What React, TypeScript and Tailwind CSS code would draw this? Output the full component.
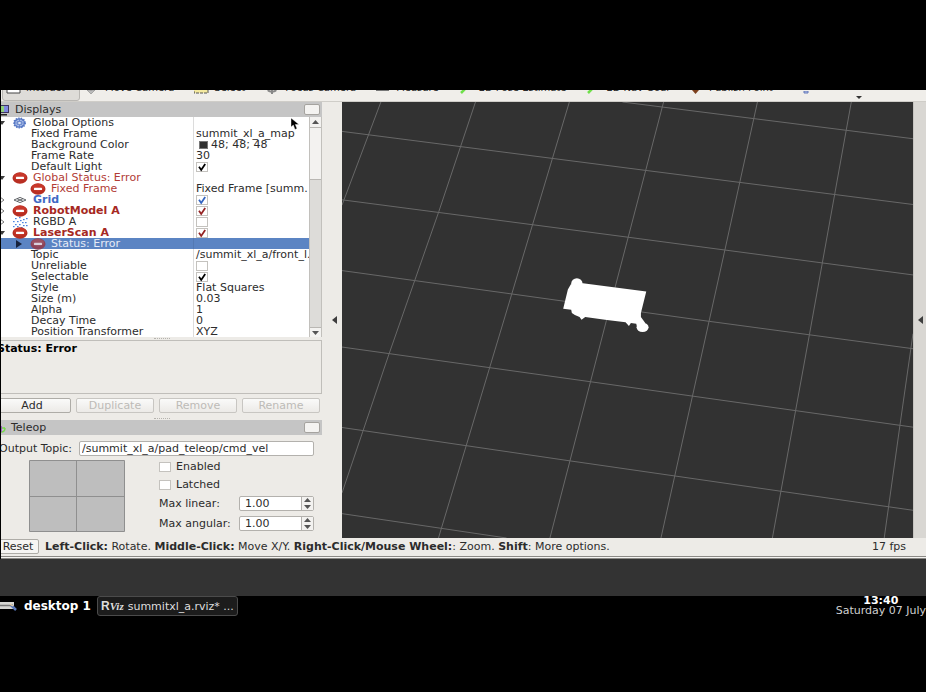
import clsx from "clsx";
import { ReactNode } from "react";

type Row = {
  name: string;
  value?: string;
  check?: "on" | "off";
  checkColor?: string;
  swatch?: boolean;
  level?: "top" | "child" | "prop";
  icon?: ReactNode;
  arrow?: "open" | "closed";
  nameClass?: string;
  selected?: boolean;
};

function ErrorIcon({ dim }: { dim?: boolean }) {
  return (
    <svg viewBox="0 0 16 12" className="h-3 w-4 shrink-0">
      <ellipse cx="8" cy="6" rx="7.5" ry="5.8" fill={dim ? "#8c4358" : "#b82e22"} />
      <ellipse cx="8" cy="4.6" rx="6" ry="3.8" fill={dim ? "#9a5162" : "#c8382b"} />
      <rect x="4" y="4.7" width="8" height="2.4" rx="0.6" fill={dim ? "#d8cfdc" : "#fff"} />
    </svg>
  );
}

function GearIcon() {
  return (
    <svg viewBox="0 0 16 12" className="h-3 w-4 shrink-0" fill="none" stroke="#5577c4">
      <ellipse cx="7.5" cy="6" rx="5" ry="4.2" fill="#a9bce6" strokeWidth="1.2" />
      <ellipse cx="7.5" cy="6" rx="5.8" ry="4.9" strokeWidth="1.4" strokeDasharray="1.3 1.3" />
      <path d="M7.5 2v8M2.5 6h10M4 3.2l7 5.6M11 3.2 4 8.8" strokeWidth="0.7" />
      <ellipse cx="7.5" cy="6" rx="2" ry="1.6" fill="#dfe7f8" strokeWidth="0.8" />
    </svg>
  );
}

function GridIcon() {
  return (
    <svg viewBox="0 0 16 12" className="h-3 w-4 shrink-0" fill="none" stroke="#55585c" strokeWidth="0.9">
      <path d="M2 6l6-2.600L14 6 8 8.600zM5 4.700l6 2.600M11 4.700 5 7.300" />
    </svg>
  );
}

function CloudIcon() {
  const dots = [
    [3, 2], [7, 1], [11, 3], [14, 2], [1, 5], [5, 5], [8, 4], [10, 6], [13, 6],
    [3, 8], [7, 8], [11, 9], [5, 10], [14, 9], [9, 11], [1, 10],
  ];
  return (
    <svg viewBox="0 0 16 12" className="h-3 w-4 shrink-0">
      {dots.map(([x, y]) => (
        <rect key={`${x}-${y}`} x={x} y={y} width="1.6" height="1.2" fill="#4b83e0" />
      ))}
    </svg>
  );
}

const rows: Row[] = [
  { name: "Global Options", level: "top", icon: <GearIcon />, arrow: "open" },
  { name: "Fixed Frame", value: "summit_xl_a_map" },
  { name: "Background Color", value: "48; 48; 48", swatch: true },
  { name: "Frame Rate", value: "30" },
  { name: "Default Light", check: "on", checkColor: "text-black" },
  { name: "Global Status: Error", level: "top", icon: <ErrorIcon />, arrow: "open", nameClass: "text-[#b23c36]" },
  { name: "Fixed Frame", value: "Fixed Frame [summ.", level: "child", icon: <ErrorIcon />, nameClass: "text-[#b23c36]" },
  { name: "Grid", level: "top", icon: <GridIcon />, arrow: "closed", check: "on", checkColor: "text-[#3565c0]", nameClass: "font-bold text-[#4169c4]" },
  { name: "RobotModel A", level: "top", icon: <ErrorIcon />, arrow: "closed", check: "on", checkColor: "text-[#952424]", nameClass: "font-bold text-[#a62822]" },
  { name: "RGBD A", level: "top", icon: <CloudIcon />, arrow: "closed", check: "off" },
  { name: "LaserScan A", level: "top", icon: <ErrorIcon />, arrow: "open", check: "on", checkColor: "text-[#952424]", nameClass: "font-bold text-[#a62822]" },
  { name: "Status: Error", level: "child", icon: <ErrorIcon dim />, arrow: "closed", nameClass: "text-[#e6ebf6]", selected: true },
  { name: "Topic", value: "/summit_xl_a/front_l." },
  { name: "Unreliable", check: "off" },
  { name: "Selectable", check: "on", checkColor: "text-black" },
  { name: "Style", value: "Flat Squares" },
  { name: "Size (m)", value: "0.03" },
  { name: "Alpha", value: "1" },
  { name: "Decay Time", value: "0" },
  { name: "Position Transformer", value: "XYZ" },
];

const tools = [
  { label: "Interact", icon: <path d="M1 0h13v15H1z" fill="#fff" stroke="#444" /> },
  { label: "Move Camera", icon: <path d="M2 12h8l-4 4zM5 8h2v4H5z" fill="#bbb" stroke="#888" strokeWidth="0.6" /> },
  { label: "Select", icon: <path d="M0 2h14v13H0z" fill="#f4e9a0" stroke="#555" strokeDasharray="3 1" /> },
  { label: "Focus Camera", icon: <path d="M7 7v9M3 12c1 2 7 2 8 0" fill="none" stroke="#888" strokeWidth="2" /> },
  { label: "Measure", icon: <path d="M0 10h13v3H0z" fill="#777" /> },
  { label: "2D Pose Estimate", icon: <path d="M2 15 8 9" stroke="#6fe04a" strokeWidth="2.5" /> },
  { label: "2D Nav Goal", icon: <path d="M2 15 8 9" stroke="#6fe04a" strokeWidth="2.5" /> },
  { label: "Publish Point", icon: <path d="M3 8h7v4l-3.500 4L3 12z" fill="#7c3f1c" /> },
];

function Check({ label, on, color }: { label: string; on?: boolean; color?: string }) {
  return (
    <span className="relative inline-flex h-2.5 w-3 shrink-0">
      <input
        type="checkbox"
        aria-label={label}
        defaultChecked={on}
        className="peer h-2.5 w-3 appearance-none border border-[#c4c2be] bg-white"
      />
      <svg viewBox="0 0 12 10" className={clsx("pointer-events-none absolute inset-0 hidden peer-checked:block", color)}>
        <path d="M3 4.800 5.200 8 9.200 2" fill="none" stroke="currentColor" strokeWidth="1.800" />
      </svg>
    </span>
  );
}

function PanelTitle({ icon, title }: { icon: ReactNode; title: string }) {
  return (
    <div className="flex h-[15px] items-center bg-[#c5c5c5] pr-0.5">
      {icon}
      <h2 className="flex-1">{title}</h2>
      <button aria-label={`Close ${title}`} className="h-[11px] w-4 rounded-[2px] border border-[#a5a39f] bg-[#f4f3f1]" />
    </div>
  );
}

function SplitDots() {
  return (
    <div className="flex h-[3px] items-center justify-center">
      <div className="w-4 border-t border-dotted border-[#b5b3ae]" />
    </div>
  );
}

function Arrow({ row }: { row: Row }) {
  if (row.selected) {
    return (
      <svg viewBox="0 0 6 8" className="h-2 w-1.5">
        <path d="M0 0v8l6-4z" fill="#17223c" />
      </svg>
    );
  }
  return (
    <svg viewBox="0 0 6 8" className="-ml-0.5 h-2 w-1.5">
      {row.arrow === "open" && <path d="M0 2h6L3 6z" fill="#3c3c3c" />}
      {row.arrow === "closed" && <path d="M1 1v6l4-3z" fill="none" stroke="#777" />}
    </svg>
  );
}

function DisplayTree() {
  return (
    <div className="flex bg-white">
      <table className="block min-w-0 flex-1">
        <tbody className="block">
          {rows.map((row) => (
            <tr key={row.name + row.value} className={clsx("flex h-[11px]", row.selected && "bg-[#5b84c3]")}>
              <td className="flex w-48 shrink-0 items-center p-0 whitespace-nowrap">
                <span className={clsx("flex shrink-0 items-center", row.level === "top" ? "w-[11px]" : row.level === "child" ? "w-[29px] pl-[15px]" : "w-[30px]")}>
                  {row.arrow && <Arrow row={row} />}
                </span>
                {row.icon && <span className="mr-[5px] flex">{row.icon}</span>}
                <span className={row.nameClass}>{row.name}</span>
              </td>
              <td className={clsx("flex min-w-0 flex-1 items-center overflow-x-clip border-l p-0 pl-0.5 whitespace-nowrap", row.selected ? "border-[#5379b3]" : "border-[#dcdcdc]")}>
                {row.swatch && <span className="mr-[3px] ml-[3px] h-2 w-[9px] border border-[#777] bg-[#303030]" />}
                {row.check ? <Check label={row.name} on={row.check === "on"} color={row.checkColor} /> : row.value}
              </td>
            </tr>
          ))}
        </tbody>
      </table>
      <div className="flex w-[13px] shrink-0 flex-col border-x border-[#c2c0bc] bg-[#dddcd9]">
        <button aria-label="Scroll up" className="flex h-2.5 items-center justify-center bg-[#f3f2f0]">
          <svg viewBox="0 0 7 4" className="h-1 w-[7px]"><path d="M0 4h7L3.500 0z" fill="#555" /></svg>
        </button>
        <div className="h-[53px] border-y border-[#b9b7b3] bg-[#f3f2f0]" />
        <div className="flex-1" />
        <button aria-label="Scroll down" className="flex h-2.5 items-center justify-center border-t border-[#b9b7b3] bg-[#f3f2f0]">
          <svg viewBox="0 0 7 4" className="h-1 w-[7px]"><path d="M0 0h7L3.500 4z" fill="#555" /></svg>
        </button>
      </div>
    </div>
  );
}

function ActionButton({ label, disabled }: { label: string; disabled?: boolean }) {
  return (
    <button
      disabled={disabled}
      className="h-[15px] flex-1 rounded-[2px] border border-[#aeaca7] bg-linear-to-b from-[#fafaf9] to-[#eceae7] leading-[13px] disabled:border-[#c8c6c2] disabled:text-[#bdbbb7]"
    >
      {label}
    </button>
  );
}

function SpinBox({ id, label }: { id: string; label: string }) {
  return (
    <div className="flex h-[15px] items-center">
      <label htmlFor={id} className="w-20">{label}</label>
      <div className="flex h-[15px] flex-1 rounded-[2px] border border-[#b3b1ad] bg-white">
        <input id={id} defaultValue="1.00" className="w-0 min-w-0 flex-1 bg-transparent pl-[5px] outline-none" />
        <div className="flex w-3 flex-col items-center justify-center gap-[3px] border-l border-[#b3b1ad] bg-[#f3f2f0]">
          <button aria-label={`Increase ${label}`}>
            <svg viewBox="0 0 7 4" className="block h-1 w-[7px]"><path d="M0 4h7L3.500 0z" fill="#555" /></svg>
          </button>
          <button aria-label={`Decrease ${label}`}>
            <svg viewBox="0 0 7 4" className="block h-1 w-[7px]"><path d="M0 0h7L3.500 4z" fill="#555" /></svg>
          </button>
        </div>
      </div>
    </div>
  );
}

function Teleop() {
  return (
    <section>
      <PanelTitle
        title="Teleop"
        icon={
          <svg viewBox="0 0 10 12" className="h-3 w-2.5 shrink-0" fill="none">
            <path d="M0 6h4M4 6c0 3-1 4-4 4" stroke="#77d94e" strokeWidth="1.500" />
            <path d="M0 4v6" stroke="#9b3fd0" strokeWidth="1.500" />
          </svg>
        }
      />
      <div className="mt-1.5 flex items-center pr-2">
        <label htmlFor="topic" className="-ml-0.5 w-20 whitespace-nowrap">Output Topic:</label>
        <input
          id="topic"
          defaultValue="/summit_xl_a/pad_teleop/cmd_vel"
          className="h-[15px] min-w-0 flex-1 rounded-[2px] border border-[#b3b1ad] bg-white pl-0.5 outline-none"
        />
      </div>
      <div className="mt-1 flex pr-2 pl-7">
        <svg viewBox="0 0 96 72" className="h-18 w-24 shrink-0" fill="#bebebe" stroke="#8f8f8f">
          <path d="M.5.5h95v71H.5zM47.500.5v71M.5 36.500h95" />
        </svg>
        <div className="ml-[34px] flex flex-1 flex-col">
          <label className="mt-px flex h-[11px] items-center gap-[5px]">
            <Check label="Enabled" />
            Enabled
          </label>
          <label className="mt-[7px] flex h-[11px] items-center gap-[5px]">
            <Check label="Latched" />
            Latched
          </label>
          <div className="mt-1.5 flex flex-col gap-[5px]">
            <SpinBox id="linear" label="Max linear:" />
            <SpinBox id="angular" label="Max angular:" />
          </div>
        </div>
      </div>
    </section>
  );
}

function CollapseArrow() {
  return (
    <svg viewBox="0 0 5 8" className="h-2 w-[5px]">
      <path d="M5 0v8L0 4z" fill="#3d3d3d" />
    </svg>
  );
}

// Ground grid seen in perspective, with the robot footprint on top.
function SceneView() {
  return (
    <svg
      viewBox="5 21 1527 1306"
      preserveAspectRatio="none"
      className="h-[436px] min-w-0 flex-1 bg-[#323232]"
      role="img"
      aria-label="3D view"
    >
      <path
        fill="none"
        stroke="#686868"
        strokeWidth="1"
        vectorEffect="non-scaling-stroke"
        d="M109 21 5 330M362 21 264 349 131 775 5 1192M613 21 459 596 263 1327M865 21 712 676 561 1327M1116 21 1029 464 858 1327M1367 21 1255 718 1156 1327M1532 715 1497 990 1455 1327M755 21 1532 131M5 109 818 226 1532 328M5 314 770 426 1532 539M5 526 459 596 987 678 1532 760M5 755 670 859 1532 995M5 996 615 1096 1532 1244M5 1254 445 1327"
      />
      <g transform="translate(535 495) scale(.892 1)" fill="#fff">
        <path d="M92 72 128 69 318 94 302 158 302 170 315 188 292 207 288 190 272 188 266 197 256 186 200 179 135 170 124 178 118 170 104 164 95 158 93 148 69 145 83 88z" />
        <ellipse cx="110" cy="70" rx="17" ry="16" />
        <ellipse cx="307" cy="201" rx="18" ry="14" />
      </g>
    </svg>
  );
}

function ToolBar() {
  return (
    <div className="flex h-3 items-end overflow-hidden border-b border-[#cfcdc8] bg-[#f0eeea] text-[10px]">
      {tools.map((tool, i) => (
        <button
          key={tool.label}
          className={clsx(
            "ml-px flex h-6 shrink-0 items-start gap-1 rounded-[3px] border pr-3.5 pl-[3px] whitespace-nowrap",
            i === 0 ? "border-[#b9b7b3] bg-[#dedcd8]" : "border-transparent"
          )}
        >
          <svg viewBox="0 0 16 16" className="h-4 w-4">{tool.icon}</svg>
          <span className="leading-5">{tool.label}</span>
        </button>
      ))}
      <svg viewBox="0 0 64 10" className="ml-3 h-2.5 w-16 shrink-0">
        <path d="M4 0h4v2H4z" fill="#b4c2ea" stroke="#6478b8" />
        <path d="M56 5h6l-3 3z" fill="#333" />
      </svg>
    </div>
  );
}

function StatusBar() {
  return (
    <div className="flex h-[18px] items-center pr-5 pb-0.5 whitespace-nowrap">
      <button className="-ml-1 h-[15px] w-[42px] rounded-[2px] border border-[#aeaca7] bg-[#f6f5f3] leading-[13px]">Reset</button>
      <p className="ml-1.5 flex-1">
        <b>Left-Click:</b> Rotate. <b>Middle-Click:</b> Move X/Y. <b>Right-Click/Mouse Wheel:</b>: Zoom. <b>Shift</b>: More options.
      </p>
      <span>17 fps</span>
    </div>
  );
}

function TaskBar() {
  return (
    <footer className="flex h-5 items-center text-white">
      <svg viewBox="0 0 18 12" className="h-3 w-[18px]">
        <path d="M0 2h14v7H0z" fill="#d5d5d2" />
        <path d="M0 5.500h13" stroke="#777" strokeWidth="1.500" />
        <path d="m11 5 5 5" stroke="#5876b8" strokeWidth="2.500" />
        <path d="m10 4 3 2" stroke="#e8cfa0" strokeWidth="1.500" />
      </svg>
      <span className="ml-1.5 text-xs leading-3 font-bold">desktop 1</span>
      <button className="ml-1.5 flex h-5 items-center gap-1 rounded-[3px] border border-[#4b4b4b] bg-[#1c1c1c] px-[3px] whitespace-nowrap text-[#dedede]">
        <span className="font-['Liberation_Sans'] text-xs font-bold">
          R<i className="font-['Liberation_Serif'] text-[11px]">Viz</i>
        </span>
        summitxl_a.rviz* ...
      </button>
      <div className="ml-auto text-center leading-[10px] whitespace-nowrap">
        <div className="font-bold">13:40</div>
        <div className="text-[#d0d0d0]">Saturday 07 July</div>
      </div>
    </footer>
  );
}

export default function App() {
  return (
    <div className="min-h-screen overflow-hidden bg-black pt-[90px] font-['DejaVu_Sans',sans-serif] text-[11px] leading-[11px] text-[#2c2c2c]">
      <main className="ml-px overflow-hidden bg-[#edebe7]">
        <ToolBar />
        <div className="flex">
          <aside className="w-[321px] shrink-0">
            <PanelTitle
              title="Displays"
              icon={
                <svg viewBox="0 0 14 12" className="h-3 w-3.5 shrink-0">
                  <path d="M0 1h8v8H0z" fill="#3c3560" />
                  <path d="M0 2h3v6H0z" fill="#8fd07a" />
                  <path d="M3 2h4v6H3z" fill="#7f88e0" />
                  <path d="M0 10h6v1.500H0z" fill="#222" />
                </svg>
              }
            />
            <DisplayTree />
            <SplitDots />
            <div className="h-[54px] border border-l-0 border-[#c0beba] pt-0.5">
              <p className="-ml-1 font-bold text-black">Status: Error</p>
            </div>
            <div className="-ml-2 flex gap-[5px] py-1 pr-0.5">
              <ActionButton label="Add" />
              <ActionButton label="Duplicate" disabled />
              <ActionButton label="Remove" disabled />
              <ActionButton label="Rename" disabled />
            </div>
            <SplitDots />
            <Teleop />
          </aside>
          <div className="flex w-5 items-center justify-center pl-1">
            <CollapseArrow />
          </div>
          <SceneView />
          <div className="flex w-[13px] items-center justify-center border-l border-[#c6c4c0] bg-[#d9d7d3]">
            <CollapseArrow />
          </div>
        </div>
        <StatusBar />
        <div className="h-[3px] border-y border-[#8b8985] bg-[#f4f3f1]" />
      </main>
      <div className="h-[37px] bg-[#333]" />
      <TaskBar />
      <svg viewBox="0 0 8 12" className="absolute top-[118px] left-[291px] h-3 w-2">
        <path d="M0 0v9l2.300-2L4 11.500l2-1L4.300 6.500H8z" fill="#000" stroke="#fff" strokeWidth="0.400" />
      </svg>
    </div>
  );
}
